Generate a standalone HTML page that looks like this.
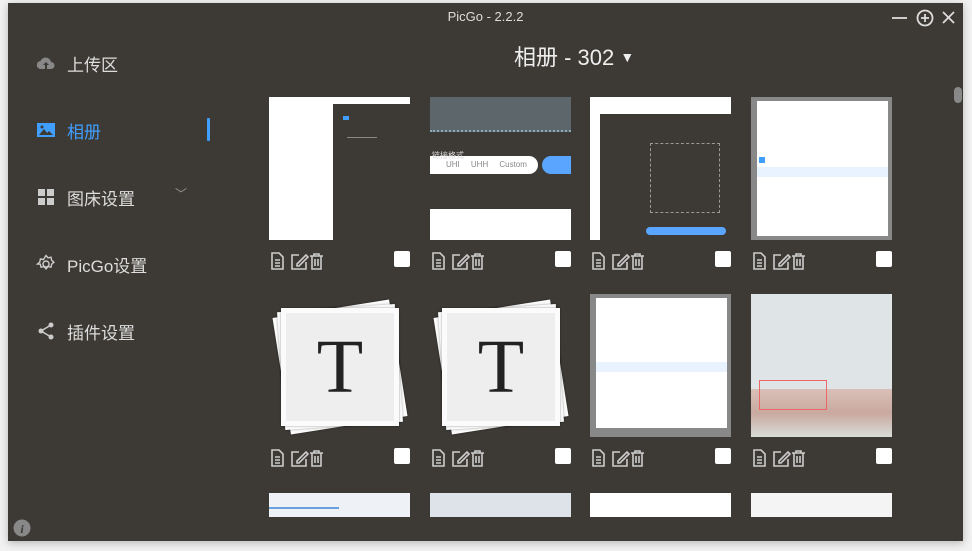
<!DOCTYPE html>
<html><head><meta charset="utf-8"><style>
*{margin:0;padding:0;box-sizing:border-box}
body{width:972px;height:551px;background:#f2f2f2;position:relative;overflow:hidden;font-family:"Liberation Sans","Noto Sans CJK SC",sans-serif}
.win{position:absolute;left:8px;top:3px;width:955px;height:538px;background:#3d3a35;box-shadow:0 2px 8px rgba(0,0,0,.25);overflow:hidden}
.title{position:absolute;left:0;right:0;top:6px;text-align:center;color:#ddd;font-size:13px}
.ctl{position:absolute;top:5px;color:#ddd}
.nav{position:absolute;left:28px;color:#ddd;font-size:17px;display:flex;align-items:center;height:24px}
.nav svg{width:20px;height:20px;margin-right:11px}
.nav.act{color:#409eff}
.bar{position:absolute;left:199px;top:115px;width:3px;height:23px;background:#409eff;border-radius:1px}
.h{position:absolute;left:506px;top:37px;color:#eee;font-size:22px}
.cell{position:absolute;width:141px;height:143px;background:#fff;overflow:hidden}
.tools{position:absolute;display:flex;gap:2px}
.cb{position:absolute;width:16px;height:16px;background:#fff;border-radius:2px}
.Tc{position:absolute;width:141px;height:143px}
.card{position:absolute;left:12px;top:14px;width:118px;height:118px;background:#fbfbfb;box-shadow:0 0 2px rgba(0,0,0,.4)}
</style></head><body>
<div class="win">
<div class="title">PicGo - 2.2.2</div>
<svg class="ctl" style="left:882px" width="70" height="20" viewBox="0 0 70 20" fill="none" stroke="#ddd" stroke-width="1.8"><line x1="2" y1="10" x2="17" y2="10"/><circle cx="35" cy="10" r="7.5"/><line x1="35" y1="6" x2="35" y2="14"/><line x1="31" y1="10" x2="39" y2="10"/><line x1="53" y1="4" x2="64" y2="15"/><line x1="64" y1="4" x2="53" y2="15"/></svg>

<div class="nav" style="top:48px"><svg viewBox="0 0 20 20"><path d="M5 16a4 4 0 0 1-.5-8 5.5 5.5 0 0 1 10.5 1 3.5 3.5 0 0 1 0 7z" fill="#888"/><path d="M10 9l-3 3h2v4h2v-4h2z" fill="#3d3a35"/></svg>上传区</div>
<div class="nav act" style="top:115px"><svg viewBox="0 0 20 20"><rect x="1" y="3" width="18" height="14" fill="#409eff"/><path d="M3 15l5-6 3 4 2-2 4 4z" fill="#3d3a35"/><circle cx="6" cy="7" r="1.5" fill="#3d3a35"/></svg>相册</div>
<div class="bar"></div>
<div class="nav" style="top:182px"><svg viewBox="0 0 20 20" fill="#ccc"><rect x="2" y="2" width="7" height="7"/><rect x="11" y="2" width="7" height="7"/><rect x="2" y="11" width="7" height="7"/><rect x="11" y="11" width="7" height="7"/></svg>图床设置<span style="position:absolute;left:139px;top:0;color:#999;font-size:12px">﹀</span></div>
<div class="nav" style="top:249px"><svg viewBox="0 0 20 20" fill="none" stroke="#ccc" stroke-width="1.4"><circle cx="10" cy="10" r="3"/><path d="M10 1.5l2 2.3 3-.6.6 3 2.3 2-2.3 2-.6 3-3-.6-2 2.3-2-2.3-3 .6-.6-3L1.5 10l2.3-2 .6-3 3 .6z"/></svg>PicGo设置</div>
<div class="nav" style="top:316px"><svg viewBox="0 0 20 20" fill="#ccc"><circle cx="15" cy="4" r="2.5"/><circle cx="5" cy="10" r="2.5"/><circle cx="15" cy="16" r="2.5"/><path d="M5 10L15 4M5 10l10 6" stroke="#ccc" stroke-width="1.5"/></svg>插件设置</div>
<svg style="position:absolute;left:5px;top:516px" width="18" height="18" viewBox="0 0 18 18"><circle cx="9" cy="9" r="8.5" fill="#888"/><text x="9" y="14" font-size="12" font-style="italic" font-weight="bold" fill="#3d3a35" text-anchor="middle" font-family="Liberation Serif">i</text></svg>

<div class="h">相册 - 302 <span style="font-size:14px;position:relative;top:-3px">▼</span></div>
<div style="position:absolute;left:946px;top:84px;width:8px;height:16px;background:#888;border-radius:4px"></div>

<div class="cell" style="left:261px;top:94px"><div style="position:absolute;left:64px;top:7px;width:80px;height:136px;background:#3d3a35"></div><div style="position:absolute;left:74px;top:19px;width:6px;height:4px;background:#409eff"></div><div style="position:absolute;left:78px;top:40px;width:30px;height:60px;border-top:1px solid #888"></div></div>
<div class="cell" style="left:422px;top:94px;background:#3d3a35"><div style="position:absolute;left:0;top:0;width:141px;height:35px;background:#5d666a;border-bottom:2px dotted #8ab"></div><div style="position:absolute;left:0;top:59px;width:108px;height:18px;background:#fff;border-radius:0 9px 9px 0;color:#888;font-size:8px;line-height:18px;padding-left:16px">UHI &nbsp;&nbsp;&nbsp; UHH &nbsp;&nbsp;&nbsp; Custom</div><div style="position:absolute;left:112px;top:59px;width:40px;height:18px;background:#5aa5ff;border-radius:9px"></div><div style="position:absolute;left:0;top:112px;width:141px;height:31px;background:#fff"></div><div style="position:absolute;left:2px;top:53px;color:#ddd;font-size:8px">链接格式</div></div>
<div class="cell" style="left:582px;top:94px"><div style="position:absolute;left:10px;top:17px;width:131px;height:126px;background:#3d3a35"></div><div style="position:absolute;left:60px;top:46px;width:70px;height:70px;border:1px dashed #999"></div><div style="position:absolute;left:56px;top:130px;width:80px;height:8px;background:#5aa5ff;border-radius:4px"></div></div>
<div class="cell" style="left:743px;top:94px;background:#888"><div style="position:absolute;left:6px;top:4px;width:131px;height:135px;background:#fff"></div><div style="position:absolute;left:6px;top:70px;width:131px;height:10px;background:#e8f3ff"></div><div style="position:absolute;left:8px;top:60px;width:6px;height:6px;background:#409eff"></div></div>

<div class="Tc" style="left:261px;top:291px"><div class="card" style="transform:rotate(-9deg)"></div><div class="card" style="transform:rotate(-4deg)"></div><div class="card" style="background:#eee;border:5px solid #fbfbfb;font-family:'Liberation Serif',serif;font-size:76px;color:#222;text-align:center;line-height:108px">T</div></div>
<div class="Tc" style="left:422px;top:291px"><div class="card" style="transform:rotate(-9deg)"></div><div class="card" style="transform:rotate(-4deg)"></div><div class="card" style="background:#eee;border:5px solid #fbfbfb;font-family:'Liberation Serif',serif;font-size:76px;color:#222;text-align:center;line-height:108px">T</div></div>
<div class="cell" style="left:582px;top:291px;background:#888"><div style="position:absolute;left:6px;top:4px;width:131px;height:130px;background:#fff"></div><div style="position:absolute;left:6px;top:68px;width:131px;height:10px;background:#e8f3ff"></div></div>
<div class="cell" style="left:743px;top:291px;background:#dfe4e6"><div style="position:absolute;left:0;top:95px;width:141px;height:48px;background:linear-gradient(#d9c0b8,#c9a9a0,#d8dcd8)"></div><div style="position:absolute;left:8px;top:86px;width:68px;height:30px;border:1px solid #e66"></div></div>

<div class="cell" style="left:261px;top:490px;height:24px;background:#eef1f5"><div style="position:absolute;left:0;top:14px;width:70px;height:2px;background:#6aa0e0"></div></div>
<div class="cell" style="left:422px;top:490px;height:24px;background:#dde3e8"></div>
<div class="cell" style="left:582px;top:490px;height:24px"></div>
<div class="cell" style="left:743px;top:490px;height:24px;background:#f4f4f4"></div>
</div>

<svg width="0" height="0" style="position:absolute"><defs>
<symbol id="tl" viewBox="0 0 56 20"><g fill="none" stroke="#ccc" stroke-width="1.6"><path d="M3 2h7l4 4v12H3z"/><path d="M6 9h5M6 12h5M6 15h5"/><path d="M30 4h-7v14h14v-7"/><path d="M28 13l9-9 2 2-9 9h-2z"/><path d="M41 5h13M45 5V3h5v2M43 5v13h9V5M46 8v7M49 8v7"/></g></symbol></defs></svg>
<svg class="tools" style="left:269px;top:251px" width="56" height="20"><use href="#tl"/></svg><div class="cb" style="left:394px;top:251px"></div>
<svg class="tools" style="left:430px;top:251px" width="56" height="20"><use href="#tl"/></svg><div class="cb" style="left:555px;top:251px"></div>
<svg class="tools" style="left:590px;top:251px" width="56" height="20"><use href="#tl"/></svg><div class="cb" style="left:715px;top:251px"></div>
<svg class="tools" style="left:751px;top:251px" width="56" height="20"><use href="#tl"/></svg><div class="cb" style="left:876px;top:251px"></div>
<svg class="tools" style="left:269px;top:448px" width="56" height="20"><use href="#tl"/></svg><div class="cb" style="left:394px;top:448px"></div>
<svg class="tools" style="left:430px;top:448px" width="56" height="20"><use href="#tl"/></svg><div class="cb" style="left:555px;top:448px"></div>
<svg class="tools" style="left:590px;top:448px" width="56" height="20"><use href="#tl"/></svg><div class="cb" style="left:715px;top:448px"></div>
<svg class="tools" style="left:751px;top:448px" width="56" height="20"><use href="#tl"/></svg><div class="cb" style="left:876px;top:448px"></div>
</body></html>
